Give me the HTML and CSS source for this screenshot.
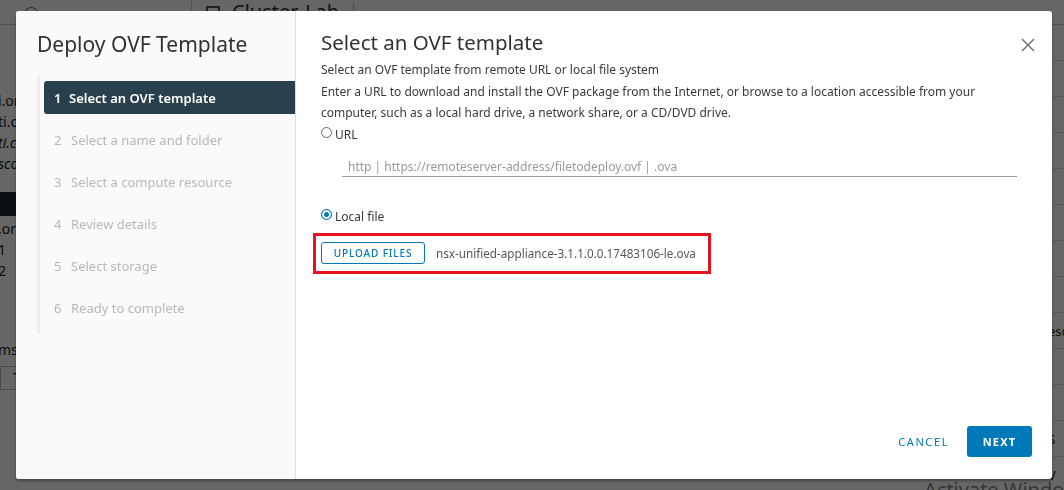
FILE: index.html
```html
<!DOCTYPE html>
<html lang="en">
<head>
  <meta charset="UTF-8" />
  <title>Deploy OVF Template</title>
  <link rel="stylesheet" href="styles.css">
</head>
<body>
  <!-- page behind the dialog -->
  <div class="page">
    <div class="topbar">
      <div class="topbar-left"><span class="globe">&#9711;</span></div>
      <div class="topbar-right"><span class="obj-icon"></span><span class="obj-name">Cluster-Lab</span><span class="actions">ACTIONS</span></div>
    </div>
    <div class="page-body">
      <div class="tree">
        <p>i.or</p>
        <p>ti.o</p>
        <p class="it">ti.c</p>
        <p class="it">sco</p>
        <p class="sel"></p>
        <p>.org</p>
        <p>1</p>
        <p>2</p>
        <p class="gap">ms</p>
        <p class="tab">T</p>
      </div>
      <div class="grid">
        <div class="row"></div>
        <div class="row"></div>
        <div class="row"></div>
        <div class="row"></div>
        <div class="row"></div>
        <div class="row"></div>
        <div class="row"></div>
        <div class="row"></div>
        <div class="row">esc</div>
        <div class="row"></div>
        <div class="row"></div>
        <div class="row">S</div>
        <div class="row">V</div>
      </div>
    </div>
    <div class="watermark">Activate Windows</div>
  </div>

  <div class="backdrop">
    <div class="modal">
      <aside class="wizard-nav">
        <h2 class="wizard-title">Deploy OVF Template</h2>
        <ol class="steps">
          <li class="step active"><span class="num">1</span>Select an OVF template</li>
          <li class="step"><span class="num">2</span>Select a name and folder</li>
          <li class="step"><span class="num">3</span>Select a compute resource</li>
          <li class="step"><span class="num">4</span>Review details</li>
          <li class="step"><span class="num">5</span>Select storage</li>
          <li class="step"><span class="num">6</span>Ready to complete</li>
        </ol>
      </aside>

      <section class="wizard-main">
        <div class="main-head">
          <h3 class="page-title">Select an OVF template</h3>
          <button class="close" aria-label="Close">
            <svg width="14" height="14" viewBox="0 0 14 14"><path d="M1 1 L13 13 M13 1 L1 13" stroke="#6a6a6a" stroke-width="1.4" fill="none"/></svg>
          </button>
        </div>
        <p class="lead">Select an OVF template from remote URL or local file system</p>
        <p class="desc">Enter a URL to download and install the OVF package from the Internet, or browse to a location accessible from your computer, such as a local hard drive, a network share, or a CD/DVD drive.</p>

        <label class="radio"><span class="dot"></span>URL</label>
        <div class="url-field">http | https://remoteserver-address/filetodeploy.ovf | .ova</div>

        <label class="radio checked"><span class="dot"></span>Local file</label>
        <div class="upload-box">
          <button class="btn-outline">UPLOAD FILES</button>
          <span class="file-name">nsx-unified-appliance-3.1.1.0.0.17483106-le.ova</span>
        </div>

        <div class="footer">
          <button class="btn-link">CANCEL</button>
          <button class="btn-primary">NEXT</button>
        </div>
      </section>
    </div>
  </div>
</body>
</html>
```

FILE: styles.css
```css
* {
  margin: 0;
  padding: 0;
  box-sizing: border-box;
}

body {
  width: 1064px;
  height: 490px;
  overflow: hidden;
  font-family: 'Noto Sans', 'Open Sans', sans-serif;
  background: #fff;
  color: #333;
}

/* Page behind the dialog */
.page {
  height: 490px;
  display: flex;
  flex-direction: column;
  font-size: 14px;
  color: #222;
}

.topbar {
  height: 32px;
  display: flex;
  border-bottom: 1px solid #ccc;
}

.topbar-left {
  width: 192px;
  border-right: 1px solid #ccc;
  padding: 2px 0 0 24px;
}

.globe {
  font-size: 13px;
  color: #666;
}

.topbar-right {
  display: flex;
  align-items: flex-start;
  gap: 12px;
  padding: 3px 0 0 14px;
}

.obj-icon {
  width: 14px;
  height: 13px;
  border: 2px solid #555;
  margin-top: 3px;
}

.obj-name {
  font-size: 20px;
  line-height: 18px;
  color: #333;
  padding-right: 14px;
  border-right: 1px solid #bbb;
}

.actions {
  font-size: 11px;
  color: #0079b8;
  letter-spacing: 1px;
  padding-top: 6px;
}

.page-body {
  flex: 1;
  display: flex;
  justify-content: space-between;
}

.tree {
  width: 20px;
  padding-top: 65px;
  overflow: hidden;
}

.tree p {
  height: 21px;
  line-height: 21px;
  white-space: nowrap;
  margin-left: -2px;
}

.tree .it {
  font-style: italic;
}

.tree .sel {
  margin-top: 18px;
  background: #1b2a33;
  height: 24px;
  margin-bottom: 2px;
}

.tree .gap {
  margin-top: 58px;
}

.tree .tab {
  margin: 6px 0 0 0;
  border: 1px solid #bbb;
  height: 24px;
  padding-left: 12px;
}

.grid {
  width: 20px;
}

.grid .row {
  height: 36px;
  border-bottom: 1px solid #ddd;
  padding-left: 4px;
  font-size: 13px;
  line-height: 36px;
  overflow: hidden;
}

.watermark {
  position: absolute;
  left: 924px;
  top: 476px;
  font-size: 20px;
  color: #888;
  white-space: nowrap;
}

/* Dialog */
.backdrop {
  position: fixed;
  inset: 0;
  background: rgba(0, 0, 0, 0.6);
  padding: 11px 12px 11px 16px;
  display: flex;
}

.modal {
  flex: 1;
  display: flex;
  background: #fff;
  border-radius: 3px;
  box-shadow: 0 2px 3px rgba(0, 0, 0, 0.35);
  overflow: hidden;
}

.wizard-nav {
  width: 280px;
  background: #fafafa;
  border-right: 1px solid #ddd;
  padding: 20px 0 0 21px;
}

.wizard-title {
  font-size: 21px;
  font-weight: 400;
  color: #313131;
  line-height: 26px;
  margin-bottom: 19px;
  white-space: nowrap;
}

.steps {
  list-style: none;
  border-left: 3px solid #eee;
  padding: 5px 0 5px 4px;
}

.step {
  height: 42px;
  display: flex;
  align-items: center;
  padding-left: 10px;
  font-size: 13px;
  color: #b8b8b8;
  white-space: nowrap;
}

.step .num {
  width: 17px;
}

.step.active {
  height: 33px;
  margin-bottom: 5px;
  background: #29414e;
  color: #fff;
  font-weight: 600;
  border-radius: 3px 0 0 3px;
}

.step.active .num {
  width: 15px;
}

.wizard-main {
  flex: 1;
  display: flex;
  flex-direction: column;
  padding: 18px 20px 22px 25px;
  font-size: 12px;
  color: #3a3a3a;
}

.main-head {
  display: flex;
  justify-content: space-between;
  align-items: flex-start;
  height: 30px;
}

.page-title {
  font-size: 20.5px;
  font-weight: 400;
  color: #313131;
  line-height: 26px;
}

.close {
  border: none;
  background: none;
  margin-top: 9px;
  margin-right: -3px;
  width: 14px;
  height: 14px;
}

.lead,
.desc {
  line-height: 21.5px;
  padding-right: 40px;
}

.radio {
  display: flex;
  align-items: center;
  gap: 3px;
  height: 21px;
}

.radio .dot {
  width: 11px;
  height: 11px;
  border: 1px solid #666;
  border-radius: 50%;
  margin-top: -4px;
}

.radio.checked .dot {
  border: 1px solid #0079b8;
  background: #0079b8;
  box-shadow: inset 0 0 0 2px #fff;
}

.url-field {
  margin: 10px 15px 29px 21px;
  height: 22px;
  padding: 3px 0 0 6px;
  border-bottom: 1px solid #9a9a9a;
  color: #9a9a9a;
}

.upload-box {
  display: flex;
  align-items: center;
  gap: 11px;
  margin: 6px 0 0 -8px;
  width: 398px;
  height: 41px;
  border: 3px solid #e8131f;
  padding-left: 5px;
}

.btn-outline {
  height: 22px;
  width: 104px;
  border: 1px solid #0079b8;
  border-radius: 3px;
  background: #fff;
  color: #0079b8;
  font-family: inherit;
  font-size: 10px;
  font-weight: 500;
  letter-spacing: 0.9px;
}

.file-name {
  color: #565656;
  font-size: 11.7px;
}

.footer {
  margin-top: auto;
  display: flex;
  justify-content: flex-end;
  align-items: center;
  gap: 18px;
}

.btn-link {
  border: none;
  background: none;
  color: #0079b8;
  font-family: inherit;
  font-size: 11px;
  letter-spacing: 1.6px;
}

.btn-primary {
  height: 31px;
  width: 65px;
  border: none;
  border-radius: 3px;
  background: #0079b8;
  color: #fff;
  font-family: inherit;
  font-size: 11px;
  font-weight: 700;
  letter-spacing: 1.2px;
}
```
